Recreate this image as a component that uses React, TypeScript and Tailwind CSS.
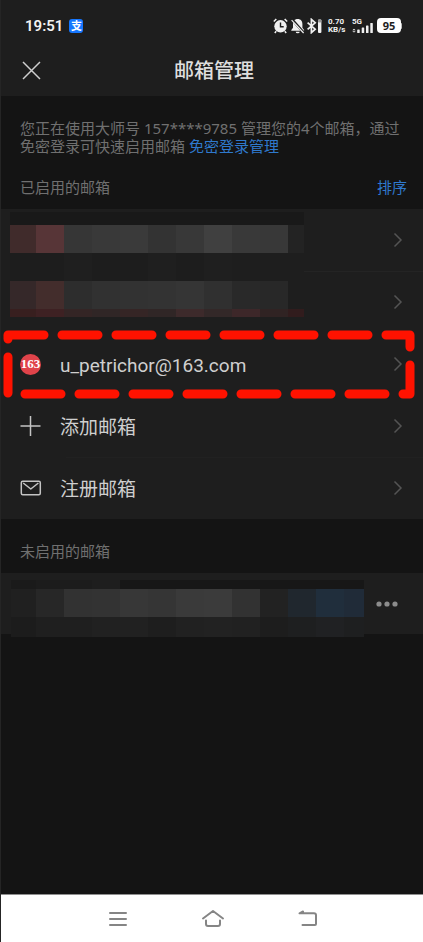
import type { ReactNode } from 'react';

const cjk = "font-['Noto_Sans','Noto_Sans_CJK_SC',sans-serif]";

// Pixelated blocks that hide private addresses: [x, y, width, height, colour]
type Block = [number, number, number, number, string];

function strip(xs: number[], y: number, h: number, colors: string[]): Block[] {
  return colors.map((c, i) => [xs[i], y, xs[i + 1] - xs[i], h, c]);
}

const enabledXs = [0, 26, 54, 82, 110, 138, 166, 194, 222, 250, 278, 294];
const enabledBlocks: Block[] = [
  [0, 0, 294, 13, '#191919'],
  ...strip(enabledXs, 13, 28, ['#402b2b', '#573537', '#363636', '#393939', '#3a3a3a', '#333333', '#383838', '#404040', '#393939', '#383838', '#232323']),
  ...strip(enabledXs, 41, 28, ['#1d1d1d', '#1d1d1d', '#1f1f1f', '#1d1d1d', '#1d1d1d', '#1f1f1f', '#1d1d1d', '#1f1f1f', '#1e1e1e', '#1e1e1e', '#1e1e1e']),
  ...strip(enabledXs, 69, 28, ['#352829', '#432d2c', '#2d2d2d', '#313131', '#323232', '#333333', '#353535', '#303030', '#292929', '#282828', '#1e1e1e']),
  ...strip(enabledXs, 97, 8, ['#381f1f', '#3e2123', '#342525', '#302626', '#352525', '#302626', '#3d2a2b', '#332828', '#3d2729', '#302323', '#311c1d']),
];

const disabledXs = [0, 25, 53, 81, 109, 137, 165, 193, 221, 249, 277, 305, 333, 353];
const disabledBlocks: Block[] = [
  ...strip([0, 25, 81, 109, 353], 0, 9, ['#1a1a1a', '#1c1c1c', '#1e1e1e', '#171717']),
  ...strip(disabledXs, 9, 28, ['#202020', '#272727', '#323232', '#333333', '#373737', '#353535', '#3a3a3a', '#3b3b3b', '#323232', '#222222', '#20272e', '#202e3c', '#202b38']),
  ...strip(disabledXs, 37, 20, ['#1c1c1c', '#1f1f1f', '#1f1f1f', '#212121', '#212121', '#1e1e1e', '#212121', '#222222', '#212121', '#1d1d1d', '#1e1f20', '#202123', '#1e1f20']),
];

function Mosaic({ width, height, blocks }: { width: number; height: number; blocks: Block[] }) {
  return (
    <svg width={width} height={height} shapeRendering="crispEdges" aria-hidden="true">
      {blocks.map(([x, y, w, h, c]) => (
        <rect key={`${x}-${y}`} x={x} y={y} width={w} height={h} fill={c} />
      ))}
    </svg>
  );
}

function Chevron() {
  return (
    <svg className="shrink-0" width="10" height="16" viewBox="0 0 10 16" fill="none" stroke="#545454" strokeWidth="1.5" aria-hidden="true">
      <path d="M1.5 1.5 8 8l-6.5 6.5" />
    </svg>
  );
}

function Row({ icon, children, name }: { icon?: ReactNode; children?: ReactNode; name?: string }) {
  return (
    <button type="button" aria-label={name} className="flex h-[62px] w-full items-center pr-5 pl-[19px] text-left">
      <span className="flex w-10 shrink-0">{icon}</span>
      <span className="flex-1 pt-0.5 text-[19px] leading-6 text-[#cfcfcf]">{children}</span>
      <Chevron />
    </button>
  );
}

function StatusBar() {
  return (
    <div className="flex h-[50px] items-center justify-between pt-px pr-[21px] pl-6 text-[#f2f2f2]">
      <div className="flex items-center gap-1.5">
        <span className="font-['Roboto',sans-serif] text-[15px] leading-5 font-semibold">19:51</span>
        <span className="flex size-[14px] items-center justify-center rounded-[3px] bg-[#1677ff] text-[11px] leading-[14px] font-bold text-white">支</span>
      </div>
      <div className="flex items-center">
        <svg width="50" height="16" viewBox="0 0 50 16" fill="none" aria-hidden="true">
          <circle cx="7.5" cy="8.3" r="6.2" fill="#f0f0f0" />
          <path d="M7.5 4.5v4.2h3.2" stroke="#1e1e1e" strokeWidth="1.4" />
          <path d="M.8 3.6 3.3 1M14.2 3.6 11.7 1M3.2 13.2 1.8 15M11.8 13.2l1.4 1.8" stroke="#f0f0f0" strokeWidth="1.5" />
          <path d="M24.7 1c-3.2 0-4.7 2.2-4.7 5v3.8L18.3 12v.7h12.8V12l-1.7-2.2V6c0-2.8-1.5-5-4.7-5ZM22.7 13.7h4a2 1.6 0 0 1-4 0Z" fill="#f0f0f0" />
          <path d="M19 1.4 30 13.8" stroke="#1e1e1e" strokeWidth="2.6" />
          <path d="M18.6 2.2 30.6 15" stroke="#f0f0f0" strokeWidth="1.2" />
          <path d="m34.6 4.6 7.6 6.6-3.8 3.4V1.4l3.8 3.4-7.6 6.6" stroke="#f0f0f0" strokeWidth="1.7" />
          <rect x="45" y="1.5" width="3.4" height="13.5" rx="1" fill="#f0f0f0" />
          <rect x="45" y="1.5" width="3.4" height="3" rx="1" fill="#999" />
        </svg>
        <div className="ml-[5px] flex w-[18px] flex-col font-['Roboto',sans-serif] text-[8px] leading-2 font-bold">
          <span>0.70</span>
          <span>KB/s</span>
        </div>
        <div className="relative ml-1.5 h-4 w-[22px]">
          <svg className="block" width="22" height="16" viewBox="0 0 22 16" fill="#f0f0f0" aria-hidden="true">
            <path d="M.3 12.2 2 10.8l1.7 1.4ZM.3 13.2 2 14.6l1.7-1.4Z" />
            <rect x="5.2" y="11.5" width="2.5" height="3.5" rx=".6" />
            <rect x="9.7" y="9.5" width="2.5" height="5.5" rx=".6" />
            <rect x="14" y="7.5" width="2.5" height="7.5" rx=".6" />
            <rect x="18.3" y="5" width="2.5" height="10" rx=".6" />
          </svg>
          <span className="absolute top-0 left-0 font-['Roboto',sans-serif] text-[8px] leading-2 font-bold">5G</span>
        </div>
        <div className="ml-[3px] flex items-center">
          <span className="flex h-[15px] w-6 items-center justify-center rounded-[4px] bg-white font-['Noto_Sans',sans-serif] text-[11px] leading-[15px] font-bold text-[#1e1e1e]">95</span>
          <span className="h-1.5 w-px rounded-r bg-[#bbb]" />
        </div>
      </div>
    </div>
  );
}

export default function App() {
  return (
    <div className={`flex min-h-screen flex-col border-l border-[#252525] bg-[#141414] ${cjk}`}>
      <header className="bg-[#1e1e1e]">
        <StatusBar />
        <div className="grid h-[46px] grid-cols-[44px_1fr_40px] items-start">
          <button type="button" aria-label="关闭" className="flex h-10 items-center pl-[21px]">
            <svg className="shrink-0" width="19" height="19" viewBox="0 0 19 19" fill="none" stroke="#cfcfcf" strokeWidth="1.5" aria-hidden="true">
              <path d="m1 1 17 17M18 1 1 18" />
            </svg>
          </button>
          <h1 className="pt-px text-center text-[20px] leading-10 font-medium text-[#dedede]">邮箱管理</h1>
        </div>
      </header>

      <main className="flex-1">
        <p className="pt-[23px] pr-4 pl-[19px] text-[15px] leading-[18px] text-[#707070]">
          您正在使用大师号 157****9785 管理您的4个邮箱，通过免密登录可快速启用邮箱{' '}
          <a href="#login" className="text-[#2f79cd]">免密登录管理</a>
        </p>

        <div className="flex h-[54px] items-end justify-between pr-4 pb-3 pl-[19px] text-[15px] leading-5">
          <h2 className="text-[#707070]">已启用的邮箱</h2>
          <button type="button" className="text-[#2f79cd]">排序</button>
        </div>

        <section className="relative bg-[#1e1e1e]">
          <Row name="邮箱 1" />
          <Row name="邮箱 2" />
          <Row
            icon={
              <span className="flex size-[21px] items-center justify-center rounded-full bg-[#e0434a] font-['Liberation_Serif',serif] text-[13px] leading-5 font-bold text-white">
                163
              </span>
            }
          >
            <span className="font-['Roboto',sans-serif]">u_petrichor@163.com</span>
          </Row>
          <Row
            icon={
              <svg width="21" height="20" viewBox="0 0 21 20" fill="none" stroke="#c4c4c4" strokeWidth="1.5" aria-hidden="true">
                <path d="M10.5 0v20M.5 10h20" />
              </svg>
            }
          >
            添加邮箱
          </Row>
          <Row
            icon={
              <svg width="22" height="16" viewBox="0 0 22 16" fill="none" stroke="#c4c4c4" strokeWidth="1.5" strokeLinejoin="round" aria-hidden="true">
                <rect x="1.3" y="1.3" width="19" height="13.4" rx="1.5" />
                <path d="m3.2 3 7.6 6 7.6-6" />
              </svg>
            }
          >
            注册邮箱
          </Row>
          <div className="pointer-events-none absolute inset-x-0 top-[62px] ml-[65px] h-px bg-[#242424]" />
          <div className="pointer-events-none absolute inset-x-0 top-[248px] ml-[65px] h-px bg-[#212121]" />
          <div className="pointer-events-none absolute top-[3px] left-[9px]">
            <Mosaic width={294} height={105} blocks={enabledBlocks} />
          </div>
          <svg className="pointer-events-none absolute top-[121px] left-[2px]" width="412" height="69" viewBox="0 0 412 69" fill="none" aria-hidden="true">
            <path d="M5 5h402v59H5Z" stroke="#ff1200" strokeWidth="9" strokeLinecap="round" strokeLinejoin="round" strokeDasharray="36 18" />
          </svg>
        </section>

        <h2 className="flex h-[54px] items-end pb-3 pl-[19px] text-[15px] leading-5 text-[#707070]">未启用的邮箱</h2>

        <section className="relative flex h-[61px] items-center justify-end bg-[#1e1e1e] pr-[25px]">
          <button type="button" aria-label="更多">
            <svg className="block" width="22" height="6" viewBox="0 0 22 6" fill="#8c8c8c" aria-hidden="true">
              <circle cx="3" cy="3" r="2.6" />
              <circle cx="11" cy="3" r="2.6" />
              <circle cx="19" cy="3" r="2.6" />
            </svg>
          </button>
          <div className="pointer-events-none absolute top-[7px] left-[10px]">
            <Mosaic width={353} height={57} blocks={disabledBlocks} />
          </div>
        </section>
      </main>

      <nav className="flex h-12 items-center justify-center gap-[71px] border-t border-[#8f8f8f] bg-white pl-[2px]">
        <button type="button" aria-label="菜单">
          <svg className="block" width="24" height="20" viewBox="0 0 24 20" fill="none" stroke="#858585" strokeWidth="2" strokeLinecap="round">
            <path d="M4 4h16M4 10h16M4 16h16" />
          </svg>
        </button>
        <button type="button" aria-label="主页">
          <svg className="block" width="24" height="20" viewBox="0 0 24 20" fill="none" stroke="#858585" strokeWidth="2" strokeLinecap="round" strokeLinejoin="round">
            <path d="M2 9.5 12 2l10 7.5M5 11.5V15a2 2 0 0 0 2 2h10a2 2 0 0 0 2-2v-3.5" />
          </svg>
        </button>
        <button type="button" aria-label="返回">
          <svg className="block" width="24" height="20" viewBox="0 0 24 20" fill="none" stroke="#858585" strokeWidth="2" strokeLinecap="round" strokeLinejoin="round">
            <path d="M7 2.500 3.500 4.300h14.500a2 2 0 0 1 2 2V15a1 1 0 0 1-1 1H6.500" />
            <path d="M8 2v2H4Z" fill="#858585" stroke="none" />
          </svg>
        </button>
      </nav>
    </div>
  );
}
